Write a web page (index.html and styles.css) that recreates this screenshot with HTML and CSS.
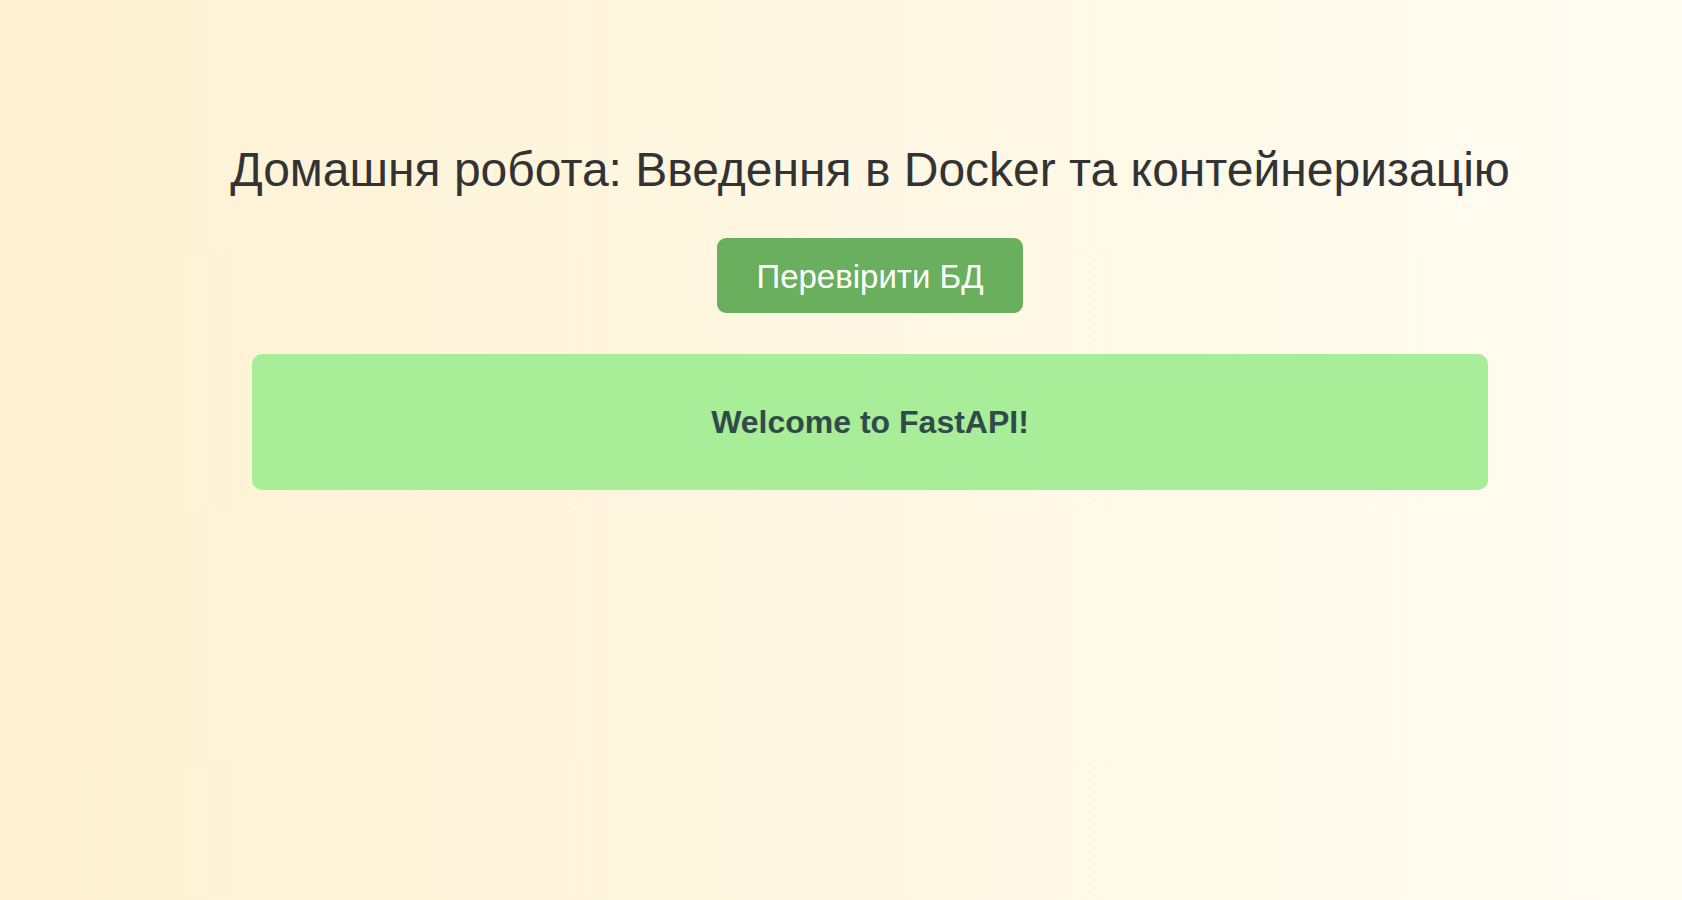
FILE: index.html
```html
<!DOCTYPE html>
<html lang="uk">
<head>
<meta charset="utf-8">
<title>Docker</title>
<link rel="stylesheet" href="styles.css">
</head>
<body>
<main class="page">
  <h1 class="title">Домашня робота: Введення в Docker та контейнеризацію</h1>
  <button class="check-btn" type="button">Перевірити БД</button>
  <div class="result">
    <h2 class="result-text">Welcome to FastAPI!</h2>
  </div>
</main>
</body>
</html>
```
FILE: styles.css
```css
html, body {
  margin: 0;
  padding: 0;
}
body {
  min-height: 100vh;
  background: linear-gradient(to right, #fff2d3 0%, #fffcf2 100%);
  font-family: "Liberation Sans", Arial, Helvetica, sans-serif;
  color: #333333;
}
.page {
  display: flex;
  flex-direction: column;
  align-items: center;
  padding: 142px 0 0 58px;
  box-sizing: border-box;
}
.title {
  margin: 0;
  font-size: 48px;
  font-weight: normal;
  line-height: 55px;
  color: #333333;
  white-space: nowrap;
}
.check-btn {
  margin-top: 41px;
  width: 306px;
  height: 75px;
  padding: 2px 0 0;
  border: none;
  border-radius: 9px;
  background: #6aaf5e;
  color: #ffffff;
  font-family: "Liberation Sans", Arial, Helvetica, sans-serif;
  font-size: 33px;
  cursor: pointer;
}
.result {
  margin-top: 41px;
  width: 1236px;
  height: 136px;
  border-radius: 10px;
  background: #a8ed98;
  display: flex;
  align-items: center;
  justify-content: center;
}
.result-text {
  margin: 0;
  font-size: 32px;
  font-weight: bold;
  color: #314a4a;
  line-height: 37px;
}
```
